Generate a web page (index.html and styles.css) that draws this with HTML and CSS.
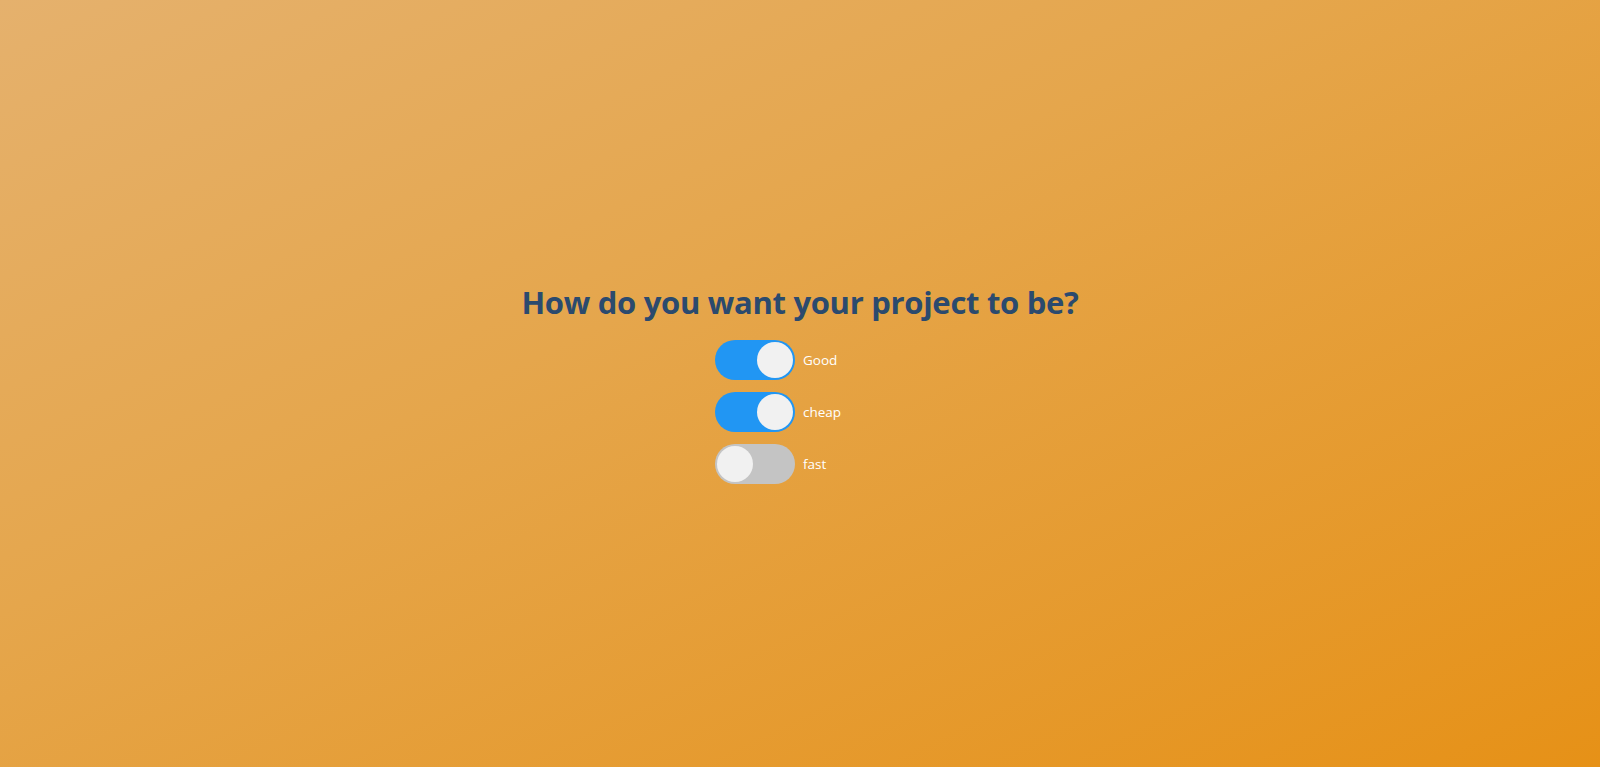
FILE: index.html
```html
<!DOCTYPE html>
<html lang="en">
<head>
<meta charset="utf-8">
<title>Good, cheap, fast</title>
<link rel="stylesheet" href="styles.css">
</head>
<body>
<main class="page">
  <h1 class="title">How do you want your project to be?</h1>
  <div class="toggles">
    <label class="toggle">
      <input type="checkbox" class="toggle-input" checked>
      <span class="track on"><span class="ball"></span></span>
      <span class="toggle-text">Good</span>
    </label>
    <label class="toggle">
      <input type="checkbox" class="toggle-input" checked>
      <span class="track on"><span class="ball"></span></span>
      <span class="toggle-text">cheap</span>
    </label>
    <label class="toggle">
      <input type="checkbox" class="toggle-input">
      <span class="track"><span class="ball"></span></span>
      <span class="toggle-text">fast</span>
    </label>
  </div>
</main>
</body>
</html>
```

FILE: styles.css
```css
html, body {
  margin: 0;
  padding: 0;
  height: 100%;
}
body {
  background: linear-gradient(to bottom right, #e5b16d 0%, #e5a64c 40%, #e69117 100%);
  font-family: "Open Sans", "Noto Sans", sans-serif;
}
.page {
  height: 100vh;
  box-sizing: border-box;
  padding-bottom: 3px;
  display: flex;
  flex-direction: column;
  align-items: center;
  justify-content: center;
}
.title {
  margin: 0 0 17px;
  font-size: 31px;
  font-weight: 700;
  color: #2b4a6e;
  letter-spacing: -0.3px;
}
.toggles {
  width: 170px;
  display: flex;
  flex-direction: column;
  gap: 12px;
}
.toggle {
  display: flex;
  align-items: center;
  gap: 8px;
  cursor: pointer;
}
.toggle-input {
  display: none;
}
.track {
  width: 80px;
  height: 40px;
  border-radius: 20px;
  background: #c4c4c4;
  display: flex;
  align-items: center;
  padding: 0 2px;
  box-sizing: border-box;
  justify-content: flex-start;
}
.track.on {
  background: #2196f3;
  justify-content: flex-end;
}
.ball {
  width: 36px;
  height: 36px;
  border-radius: 50%;
  background: #f1f1f1;
}
.toggle-text {
  color: #ffffff;
  font-size: 13.5px;
}
```
